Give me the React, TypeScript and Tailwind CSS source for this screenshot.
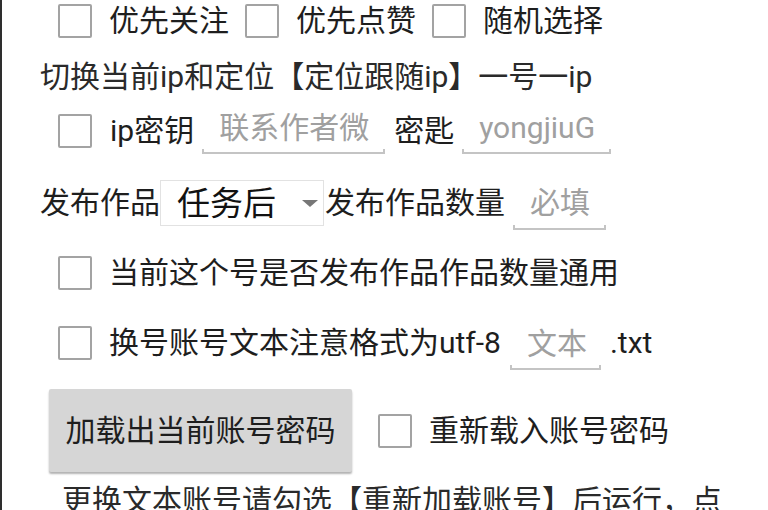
const font = { fontFamily: 'Roboto, "Noto Sans CJK SC", sans-serif' };

function Box({ className = "" }: { className?: string }) {
  return (
    <span
      className={`inline-block w-[34px] h-[34px] shrink-0 border-2 border-[#a3a3a3] rounded-[2px] bg-white ${className}`}
    />
  );
}

function Field({
  text,
  width,
  height = 46,
  className = "",
}: {
  text: string;
  width: number;
  height?: number;
  className?: string;
}) {
  return (
    <div
      className={`flex flex-col shrink-0 ${className}`}
      style={{ width, height }}
    >
      <div className="flex-1 flex items-center pl-[17px] text-[#a0a0a0] text-[30px] leading-none whitespace-nowrap">
        {text}
      </div>
      <div className="h-[5px] border-x-2 border-b-2 border-[#c4c4c4]" />
    </div>
  );
}

export default function App() {
  return (
    <div
      className="w-[768px] h-[510px] overflow-hidden bg-white border-l-2 border-[#2e2e2e] text-[#1e1e1e] text-[30px] leading-none"
      style={font}
    >
      {/* 勾选项 */}
      <div className="flex items-center h-[41px] whitespace-nowrap">
        <Box className="ml-[56px]" />
        <span className="ml-[17px]">优先关注</span>
        <Box className="ml-[16px]" />
        <span className="ml-[17px]">优先点赞</span>
        <Box className="ml-[16px]" />
        <span className="ml-[17px]">随机选择</span>
      </div>

      <div className="flex items-center h-[72px] pl-[38px] text-[#2a2a2a] whitespace-nowrap">
        切换当前ip和定位【定位跟随ip】一号一ip
      </div>

      <div className="flex items-center h-[35px] whitespace-nowrap">
        <Box className="ml-[56px]" />
        <span className="ml-[18px]">ip密钥</span>
        <Field text="联系作者微" width={183} className="ml-[8px]" />
        <span className="ml-[9px]">密匙</span>
        <Field text="yongjiuG" width={149} className="ml-[8px]" />
      </div>

      {/* 发布作品 */}
      <div className="flex items-center h-[46px] mt-[32px] whitespace-nowrap">
        <span className="ml-[38px]">发布作品</span>
        <div className="w-[164px] h-[46px] shrink-0 border border-[#e2e2e2] flex items-center pl-[16px] pr-[4px]">
          <span className="text-[33px] text-[#111]">任务后</span>
          <svg className="ml-auto" width="18" height="9" viewBox="0 0 18 9">
            <path d="M1 1 L17 1 L9 8 Z" fill="#777" />
          </svg>
        </div>
        <span className="ml-[1px]">发布作品数量</span>
        <Field text="必填" width={93} height={50} className="ml-[8px] mt-[4px]" />
      </div>

      <div className="flex items-center h-[35px] mt-[29px] whitespace-nowrap">
        <Box className="ml-[56px]" />
        <span className="ml-[17px]">当前这个号是否发布作品作品数量通用</span>
      </div>

      <div className="flex items-center h-[35px] mt-[35px] whitespace-nowrap">
        <Box className="ml-[56px]" />
        <span className="ml-[17px]">换号账号文本注意格式为utf-8</span>
        <Field text="文本" width={91} className="ml-[9px] mt-[8px]" />
        <span className="ml-[9px]">.txt</span>
      </div>

      {/* 按钮 */}
      <div className="flex items-center h-[83px] mt-[29px] whitespace-nowrap">
        <button className="ml-[47px] w-[303px] h-[83px] shrink-0 bg-[#d6d6d6] rounded-[2px] shadow-[0_2px_2px_rgba(0,0,0,0.3)] text-[30px] text-[#1e1e1e]">
          加载出当前账号密码
        </button>
        <Box className="ml-[26px]" />
        <span className="ml-[17px]">重新载入账号密码</span>
      </div>

      <div className="mt-[14px] pl-[60px] whitespace-nowrap text-[#2a2a2a]">
        更换文本账号请勾选【重新加载账号】后运行，点
      </div>
    </div>
  );
}
